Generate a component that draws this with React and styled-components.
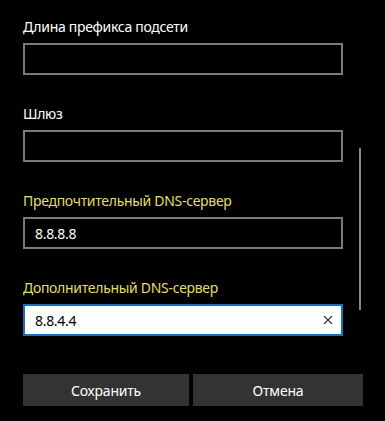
import React from "react";
import styled, { createGlobalStyle } from "styled-components";

const Global = createGlobalStyle`
  html, body { margin: 0; padding: 0; background: #000; }
  body { font-family: "Noto Sans", "Open Sans", sans-serif; }
`;

const Page = styled.div`
  position: relative;
  width: 385px;
  height: 421px;
  background: #000;
  box-sizing: border-box;
  padding: 17px 0 0 23px;
  overflow: hidden;
`;

const Form = styled.div`
  display: flex;
  flex-direction: column;
  width: 320px;
`;

const Field = styled.div`
  display: flex;
  flex-direction: column;
  gap: 6px;
  margin-bottom: 29px;
  &:last-child { margin-bottom: 0; }
`;

const Label = styled.div`
  font-size: 14px;
  line-height: 20px;
  height: 20px;
  color: ${(p) => (p.$accent ? "#e4de6c" : "#ffffff")};
  letter-spacing: -0.3px;
`;

const Box = styled.div`
  box-sizing: border-box;
  height: 32px;
  width: 320px;
  border: 2px solid ${(p) => (p.$focused ? "#1470c0" : "#7a7a7a")};
  background: ${(p) => (p.$focused ? "#ffffff" : "#000000")};
  display: flex;
  align-items: center;
  padding: 0 10px;
  color: ${(p) => (p.$focused ? "#000" : "#fff")};
  font-size: 14px;
  letter-spacing: -0.3px;
`;

const Value = styled.span`
  flex: 1;
`;

const Clear = styled.svg`
  width: 10px;
  height: 10px;
  margin-right: -2px;
`;

const Buttons = styled.div`
  display: flex;
  gap: 4px;
  margin-top: 38px;
`;

const Button = styled.div`
  width: ${(p) => p.$w}px;
  height: 32px;
  background: #333333;
  color: #fff;
  font-size: 14px;
  letter-spacing: -0.2px;
  display: flex;
  align-items: center;
  justify-content: center;
`;

const Scrollbar = styled.div`
  position: absolute;
  left: 359px;
  top: 148px;
  width: 2px;
  height: 162px;
  background: #8a8a8a;
`;

export default function App() {
  return (
    <Page>
      <Global />
      <Form>
        <Field>
          <Label>Длина префикса подсети</Label>
          <Box />
        </Field>
        <Field>
          <Label>Шлюз</Label>
          <Box />
        </Field>
        <Field>
          <Label $accent>Предпочтительный DNS-сервер</Label>
          <Box>
            <Value>8.8.8.8</Value>
          </Box>
        </Field>
        <Field>
          <Label $accent>Дополнительный DNS-сервер</Label>
          <Box $focused>
            <Value>8.8.4.4</Value>
            <Clear viewBox="0 0 10 10">
              <path d="M1 1 L9 9 M9 1 L1 9" stroke="#333" strokeWidth="1.1" />
            </Clear>
          </Box>
        </Field>
      </Form>
      <Buttons>
        <Button $w={166}>Сохранить</Button>
        <Button $w={170}>Отмена</Button>
      </Buttons>
      <Scrollbar />
    </Page>
  );
}
